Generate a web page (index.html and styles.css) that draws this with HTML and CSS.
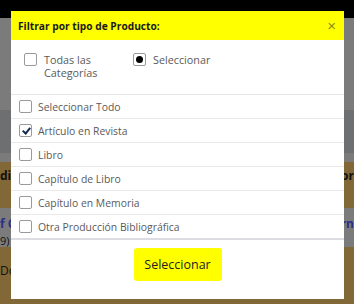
FILE: index.html
```html
<!DOCTYPE html>
<html lang="es">
<head>
    <meta charset="UTF-8">
    <meta name="viewport" content="width=device-width, initial-scale=1.0">
    <title>Filtrar por tipo de Producto</title>
    <link rel="stylesheet" href="styles.css">
</head>
<body>
    <main class="page">
        <div class="band band-nav"></div>
        <div class="band band-gray tall"></div>
        <div class="band band-dark"></div>
        <div class="band band-gray thin"></div>
        <div class="band band-brown">
            <span class="bold">di</span>
            <span class="bold">lor</span>
        </div>
        <div class="band band-gray result">
            <div class="row-text">
                <span class="link">f C</span>
                <span class="link">ern</span>
            </div>
            <div class="row-text small"><span>9)</span></div>
        </div>
        <div class="band band-brown last">
            <span>Do</span>
        </div>
    </main>

    <div class="modal">
        <div class="modal-header">
            <h2>Filtrar por tipo de Producto:</h2>
            <button class="close-button">×</button>
        </div>
        <div class="modal-options">
            <label class="option all">
                <span class="box"></span>
                <span>Todas las Categorías</span>
            </label>
            <label class="option">
                <span class="box dot"></span>
                <span>Seleccionar</span>
            </label>
        </div>
        <ul class="type-list">
            <li><span class="box"></span>Seleccionar Todo</li>
            <li><span class="box checked"></span>Artículo en Revista</li>
            <li><span class="box"></span>Libro</li>
            <li><span class="box"></span>Capítulo de Libro</li>
            <li><span class="box"></span>Capítulo en Memoria</li>
            <li><span class="box"></span>Otra Producción Bibliográfica</li>
        </ul>
        <div class="modal-footer">
            <button class="select-button">Seleccionar</button>
        </div>
    </div>
</body>
</html>
```

FILE: styles.css
```css
body {
    margin: 0;
    padding: 0;
    font-family: "Open Sans", "Noto Sans", sans-serif;
    overflow: hidden;
    background-color: #826836;
}
.page {
    display: flex;
    flex-direction: column;
    height: 304px;
}
.band {
    display: flex;
    justify-content: space-between;
    align-items: flex-start;
    font-size: 12px;
    line-height: 15px;
    color: #111;
}
.band-nav {
    height: 18px;
    background-color: #000;
}
.band-gray {
    background-color: #7b7b7b;
}
.band-gray.tall {
    height: 92px;
}
.band-gray.thin {
    height: 9px;
}
.band-dark {
    height: 43px;
    background-color: #6e6f71;
}
.band-brown {
    height: 40px;
    padding-top: 6px;
    background-color: #826836;
}
.band-brown.last {
    height: auto;
    flex: 1;
    padding-top: 16px;
}
.result {
    height: 30px;
    padding-top: 9px;
    flex-direction: column;
    align-items: stretch;
}
.row-text {
    display: flex;
    justify-content: space-between;
    line-height: 14px;
}
.row-text.small {
    margin-top: 2px;
    font-size: 11px;
    line-height: 13px;
}
.bold {
    font-weight: bold;
}
.link {
    color: #2a2f8a;
    font-weight: bold;
}

.modal {
    position: fixed;
    top: 11px;
    left: 11px;
    width: 333px;
    height: 288px;
    background-color: #fff;
    display: flex;
    flex-direction: column;
}
.modal-header {
    height: 29px;
    background-color: #ffff00;
    display: flex;
    align-items: center;
    justify-content: space-between;
    padding: 0 8px 0 7px;
}
.modal-header h2 {
    margin: 0;
    font-size: 10.2px;
    font-weight: bold;
    color: #1a1a1a;
}
.close-button {
    background: none;
    border: none;
    padding: 0;
    font-size: 15px;
    line-height: 1;
    color: #8d8c1c;
    cursor: pointer;
}
.modal-options {
    display: flex;
    padding: 13px 0 0 13px;
    height: 41px;
    border-bottom: 1px solid #e6e6e6;
}
.option {
    display: flex;
    align-items: flex-start;
    gap: 7px;
    font-size: 10.8px;
    line-height: 13px;
    color: #5a5a5a;
}
.option.all {
    width: 109px;
}
.option.all span:last-child {
    width: 60px;
}
.box {
    flex: none;
    width: 11px;
    height: 11px;
    border: 1px solid #9a9a9a;
    border-radius: 2px;
    background-color: #fff;
    position: relative;
}
.box.dot::after {
    content: "";
    position: absolute;
    top: 2px;
    left: 2px;
    width: 7px;
    height: 7px;
    border-radius: 50%;
    background-color: #000;
}
.box.checked::after {
    content: "";
    position: absolute;
    left: 4px;
    top: 1px;
    width: 3px;
    height: 6px;
    border: solid #142850;
    border-width: 0 2px 2px 0;
    transform: rotate(40deg);
}
.type-list {
    list-style: none;
    margin: 0;
    padding: 0;
    border-bottom: 2px solid #dcdce2;
}
.type-list li {
    display: flex;
    align-items: center;
    gap: 6px;
    height: 23px;
    padding-left: 8px;
    border-bottom: 1px solid #e9e9e9;
    font-size: 10.4px;
    color: #5a5a5a;
}
.type-list li:last-child {
    border-bottom: none;
}
.modal-footer {
    flex: 1;
    display: flex;
    justify-content: center;
    padding-top: 8px;
}
.select-button {
    width: 88px;
    height: 33px;
    background-color: #ffff00;
    border: none;
    border-radius: 3px;
    font-family: "Open Sans", "Noto Sans", sans-serif;
    font-size: 12.5px;
    color: #222;
    cursor: pointer;
}
```
